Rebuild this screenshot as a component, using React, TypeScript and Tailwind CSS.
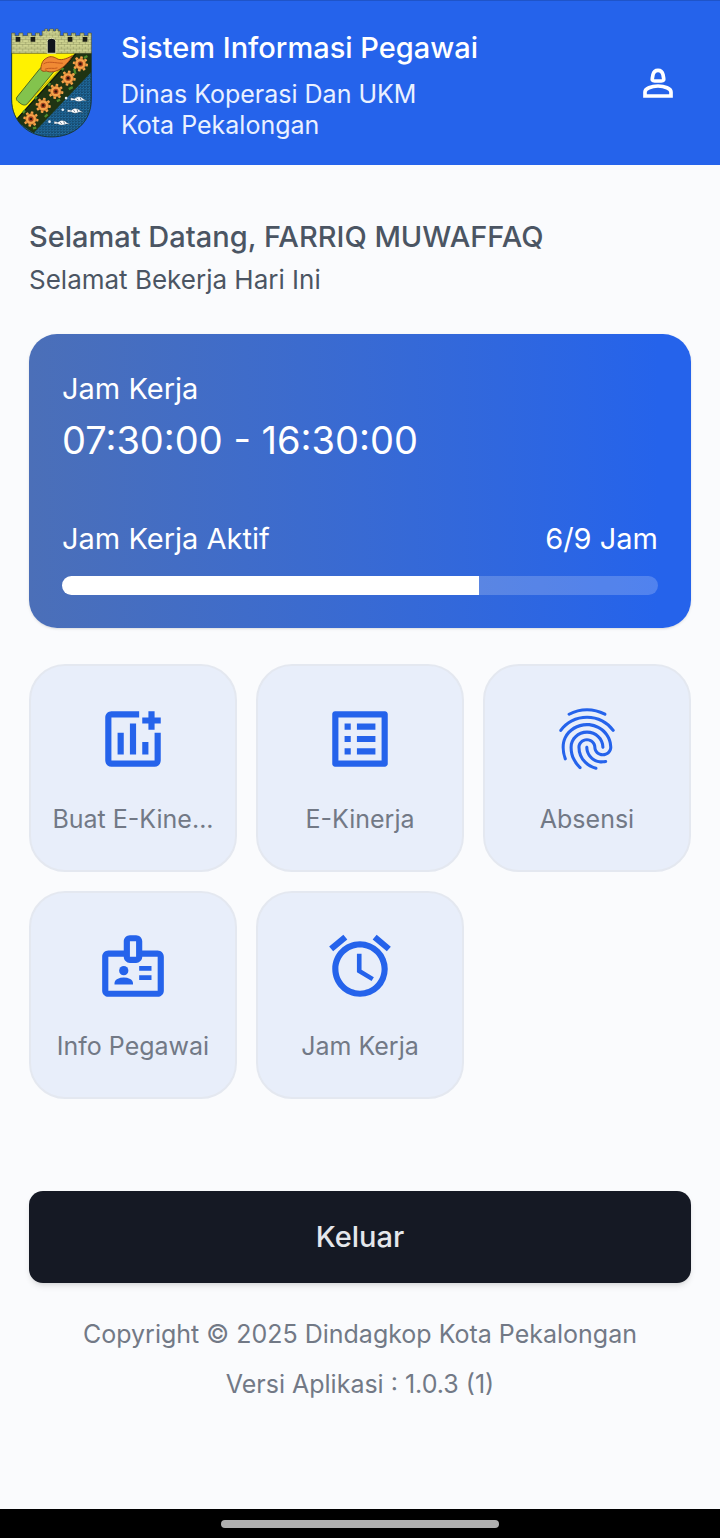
import type { ReactNode } from "react";
import { MdAlarm, MdFingerprint, MdListAlt, MdOutlineBadge } from "react-icons/md";

const GEARS = [
  [241, 192],
  [204, 235],
  [167, 275],
  [129, 317],
  [92, 358],
];
const FISH = [
  [236, 298],
  [226, 333],
  [186, 369],
];
const TEETH = [0, 45, 90, 135, 180, 225, 270, 315];

function CityEmblem() {
  return (
    <svg viewBox="32 84 244 331" className="h-[110px] w-[81px] shrink-0" role="img" aria-label="Lambang Kota Pekalongan">
      <defs>
        <clipPath id="shield">
          <path d="M34 158H274V298C274 368 222 412 154 412C86 412 34 368 34 298Z" />
        </clipPath>
        <pattern id="brick" width="18" height="14" patternUnits="userSpaceOnUse">
          <rect width="18" height="14" fill="#d0d592" />
          <path d="M0 0H18M0 7H18M4 0V7M13 7V14" stroke="#7d824f" strokeWidth="1.4" />
        </pattern>
        <pattern id="water" width="9" height="8" patternUnits="userSpaceOnUse">
          <rect width="9" height="8" fill="#2272a8" />
          <path d="M0 2L4 5L9 2M0 7H5" stroke="#0b2438" strokeWidth="1.9" fill="none" />
        </pattern>
      </defs>
      <g clipPath="url(#shield)">
        <rect x="34" y="158" width="240" height="256" fill="url(#water)" />
        <path d="M34 158H234L40 376H34Z" fill="#fff200" />
        <path d="M226 158H274V216L100 400L44 362Z" fill="#1f3413" />
        <path d="M228 162L52 356" stroke="#0d150a" strokeWidth="3" />
        <path d="M262 168L252 174M222 206L226 222M184 210L190 204M218 262L206 268M150 250L144 258M180 300L170 304M110 290L104 298M142 344L134 352M74 332L68 340M108 384L98 386" stroke="#4f8a2a" strokeWidth="7" />
      </g>
      <path d="M50 292L120 205C128 196 148 214 164 212L84 309C78 318 69 317 62 312L53 305C48 301 47 296 50 292Z" fill="#83c34d" stroke="#4c6b24" strokeWidth="3" />
      <path d="M78 314L218 168" stroke="#8c7a10" strokeWidth="2" />
      <path d="M122 209C122 196 126 180 140 174C152 166 164 172 174 178C188 182 204 174 217 167C208 184 196 198 182 206C168 216 150 219 138 213C132 216 124 214 122 209Z" fill="#f08a34" stroke="#9a4a15" strokeWidth="3" />
      <path d="M130 192C144 182 166 190 188 190M134 208C148 202 160 208 172 204" fill="none" stroke="#c45a1c" strokeWidth="3" />
      {GEARS.map(([x, y]) => (
        <g key={x} transform={`translate(${x} ${y})`}>
          {TEETH.map((a) => (
            <rect key={a} x="-4" y="-23" width="8" height="12" rx="2" fill="#f3a34a" transform={`rotate(${a + 10})`} />
          ))}
          <circle r="16" fill="#f3a34a" stroke="#b4581c" strokeWidth="1.5" />
          <circle r="8" fill="#a8431f" />
          <circle r="4" fill="#2a1408" />
        </g>
      ))}
      {FISH.map(([x, y]) => (
        <g key={y} transform={`translate(${x} ${y})`}>
          <path d="M-24 -4L-12 -1C-6 -9 8 -9 14 0L25 5L12 4C4 9 -8 8 -13 3L-24 4Z" fill="#fff" stroke="#16344c" strokeWidth="1" />
          <path d="M-6 -1L-1 3M5 -4L7 3" stroke="#16344c" strokeWidth="2" />
          <circle cx="-38" cy="-3" r="4" fill="#e6eef5" />
        </g>
      ))}
      <path d="M34 158V298C34 368 86 412 154 412C222 412 274 368 274 298V158" fill="none" stroke="#17301f" strokeWidth="2.5" />
      <path
        d="M34 160V99H44V107H56V99H68V107H82V99H94V107H106V99H118V107H126V93H134V87H142V93H148V87H160V93H166V87H174V93H180V107H190V99H202V107H214V99H226V107H240V99H252V107H264V99H274V160Z"
        fill="url(#brick)"
        stroke="#4d522e"
        strokeWidth="2"
      />
      <path d="M141 160V124C141 112 167 112 167 124V160Z" fill="#10141c" stroke="#e3e6b4" strokeWidth="3" />
      <path d="M46 111H60V125H46ZM91 111H105V125H91ZM203 111H217V125H203ZM248 111H262V125H248Z" fill="#1a1d16" />
    </svg>
  );
}

function PersonIcon() {
  return (
    <svg viewBox="0 0 90 90" className="h-[30px] w-[30px]" fill="none" stroke="currentColor" strokeWidth="11" aria-hidden="true">
      <path d="M35 39C28 39 27 36 28 31L30 20C32 11 37 7 45 7C53 7 58 11 60 20L62 31C63 36 62 39 55 39Z" />
      <path d="M6 84V72C6 62 25 54 45 54C65 54 84 62 84 72V84Z" />
    </svg>
  );
}

function AddChartIcon({ className }: { className: string }) {
  return (
    <svg viewBox="0 0 24 24" className={className} fill="currentColor" aria-hidden="true">
      <path d="M14 3v2H5v14h14v-9h2v9c0 1.100-.9 2-2 2H5c-1.100 0-2-.9-2-2V5c0-1.100.9-2 2-2z" />
      <path d="M7 10h2v7H7zM11 7h2v10h-2zM15 13h2v4h-2zM17 3h2v2h2v2h-2v2h-2V7h-2V5h2z" />
    </svg>
  );
}

function Tile({ icon, label }: { icon: ReactNode; label: string }) {
  return (
    <button
      type="button"
      className="flex aspect-square min-w-0 flex-col items-center gap-[26px] rounded-[36px] border-2 border-[#e4e8f0] bg-[#e8eefa] pt-9 text-[#2563eb]"
    >
      {icon}
      <span className="max-w-full text-[25px] leading-[34px] whitespace-nowrap text-[#727986]">{label}</span>
    </button>
  );
}

const ICON = "size-[74px] shrink-0";

export default function App() {
  return (
    <div className="flex min-h-screen flex-col bg-[#fafbfd] font-['Inter',sans-serif]">
      <header className="flex items-center border-t border-[#1f54c8] bg-[#2563eb] pt-[23px] pr-[47px] pb-6 pl-[11px] text-white">
        <CityEmblem />
        <div className="ml-[29px] flex-1">
          <h1 className="text-[29px] leading-[48px] font-medium">Sistem Informasi Pegawai</h1>
          <p className="mt-[7px] text-[25px] leading-[31px] text-[#eaf1ff]">
            Dinas Koperasi Dan UKM
            <br />
            Kota Pekalongan
          </p>
        </div>
        <button type="button" aria-label="Profil">
          <PersonIcon />
        </button>
      </header>

      <main className="px-[29px] pt-[50px]">
        <h2 className="text-[29px] leading-[44px] font-medium text-[#4b5563]">Selamat Datang, FARRIQ MUWAFFAQ</h2>
        <p className="text-[26px] leading-[42px] text-[#4b5563]">Selamat Bekerja Hari Ini</p>

        <section className="mt-[33px] rounded-[28px] bg-linear-to-r from-[#4b6fb8] to-[#2563eb] to-95% p-[33px] text-white shadow">
          <p className="text-[29px] leading-[44px]">Jam Kerja</p>
          <p className="text-[38px] leading-[58px]">07:30:00 - 16:30:00</p>
          <div className="mt-12 flex justify-between text-[29px] leading-[44px]">
            <span>Jam Kerja Aktif</span>
            <span>6/9 Jam</span>
          </div>
          <div
            role="progressbar"
            aria-label="Jam Kerja Aktif"
            aria-valuenow={70}
            className="mt-[15px] h-[19px] overflow-hidden rounded-full bg-white/20"
          >
            <div className="h-full w-[70%] bg-white" />
          </div>
        </section>

        <nav className="mt-9 grid grid-cols-3 gap-[19px]">
          <Tile icon={<AddChartIcon className={ICON} />} label="Buat E-Kine..." />
          <Tile icon={<MdListAlt className={ICON} />} label="E-Kinerja" />
          <Tile icon={<MdFingerprint className={ICON} />} label="Absensi" />
          <Tile icon={<MdOutlineBadge className={ICON} />} label="Info Pegawai" />
          <Tile icon={<MdAlarm className={ICON} />} label="Jam Kerja" />
        </nav>

        <button
          type="button"
          className="mt-[92px] h-[92px] w-full rounded-[14px] bg-[#151924] text-[29px] font-medium text-[#e5e7eb] shadow-md"
        >
          Keluar
        </button>
      </main>

      <footer className="mt-[26px] text-center text-[25px] leading-[50px] text-[#727986]">
        <p>Copyright © 2025 Dindagkop Kota Pekalongan</p>
        <p>Versi Aplikasi : 1.0.3 (1)</p>
      </footer>

      <div className="mt-auto flex h-[29px] items-center justify-center bg-black">
        <div className="h-2 w-[278px] rounded-full bg-[#b0b0b0]" />
      </div>
    </div>
  );
}
